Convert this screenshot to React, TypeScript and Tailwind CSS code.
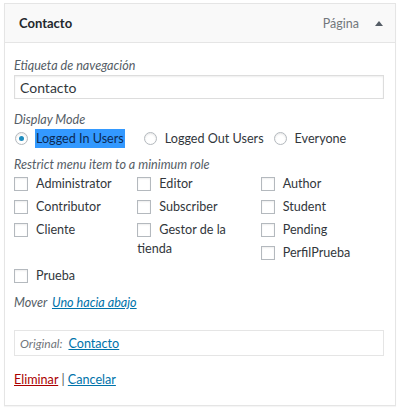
const roles = [
  { name: "Administrator" },
  { name: "Editor" },
  { name: "Author" },
  { name: "Contributor" },
  { name: "Subscriber" },
  { name: "Student" },
  { name: "Cliente" },
  { name: "Gestor de la tienda" },
  { name: "Pending" },
  { name: "PerfilPrueba", cls: "col-start-3" },
  { name: "Prueba", cls: "col-start-1" },
];

function Checkbox() {
  return (
    <span className="inline-block w-[14px] h-[14px] border border-[#b4b9be] bg-white align-[-3px] mr-[8px] shadow-[inset_0_1px_2px_rgba(0,0,0,0.07)]" />
  );
}

function Radio({ checked }: { checked?: boolean }) {
  return (
    <span className="w-[13px] h-[13px] rounded-full border border-[#b4b9be] bg-white flex items-center justify-center shrink-0 shadow-[inset_0_1px_2px_rgba(0,0,0,0.1)]">
      {checked && <span className="w-[5px] h-[5px] rounded-full bg-[#1e8cbe]" />}
    </span>
  );
}

export default function App() {
  return (
    <div
      className="w-[400px] h-[409px] bg-white pt-[3px] pl-[4px] text-[12.6px] leading-[19px] text-[#32373c]"
      style={{ fontFamily: 'Lato, "Noto Sans", sans-serif' }}
    >
      <div className="w-[392px] h-[403px] border border-[#e5e5e5] shadow-[0_1px_1px_rgba(0,0,0,0.04)]">
        {/* Cabecera */}
        <div className="h-[39px] bg-[#f9f9f9] border-b border-[#e5e5e5] flex items-center justify-between pl-[14px] pr-[12px]">
          <span className="font-bold text-[13px] text-[#23282d]">Contacto</span>
          <div className="flex items-center gap-[16px]">
            <span className="text-[#72777c] text-[12.5px]">Página</span>
            <span className="w-0 h-0 border-l-[4px] border-r-[4px] border-b-[5px] border-l-transparent border-r-transparent border-b-[#555d66]" />
          </div>
        </div>

        {/* Cuerpo */}
        <div className="pl-[9px] pr-[11px] pt-[13px]">
          <p className="italic text-[#555d66]">Etiqueta de navegación</p>
          <div className="h-[24px] border border-[#ddd] flex items-center px-[5px] text-[14px] shadow-[inset_0_1px_2px_rgba(0,0,0,0.07)]">
            Contacto
          </div>

          <p className="italic text-[#555d66] mt-[11px]">Display Mode</p>
          <div className="flex items-center h-[19px]">
            <span className="ml-[1px]">
              <Radio checked />
            </span>
            <span className="ml-[7px] bg-[#3399ff] text-[#0b2a55] px-[1px]">Logged In Users</span>
            <span className="ml-[19px]">
              <Radio />
            </span>
            <span className="ml-[8px]">Logged Out Users</span>
            <span className="ml-[10px]">
              <Radio />
            </span>
            <span className="ml-[8px]">Everyone</span>
          </div>

          <p className="italic text-[#555d66] mt-[7px]">Restrict menu item to a minimum role</p>
          <div className="grid grid-cols-3 auto-rows-[23px]">
            {roles.map((r) => (
              <label key={r.name} className={`pr-[4px] ${r.cls ?? ""}`}>
                <Checkbox />
                {r.name}
              </label>
            ))}
          </div>

          <p className="italic text-[#555d66] mt-[4px]">
            Mover{" "}
            <a className="ml-[2px] text-[#0073aa] underline">Uno hacia abajo</a>
          </p>

          <div className="mt-[18px] h-[26px] border border-[#e5e5e5] flex items-center px-[5px]">
            <span className="italic text-[#72777c] text-[12px]">Original:</span>
            <a className="ml-[6px] text-[#0073aa] underline">Contacto</a>
          </div>

          <p className="mt-[14px]">
            <a className="text-[#a00] underline">Eliminar</a>
            <span className="text-[#555]"> | </span>
            <a className="text-[#0073aa] underline">Cancelar</a>
          </p>
        </div>
      </div>
    </div>
  );
}
